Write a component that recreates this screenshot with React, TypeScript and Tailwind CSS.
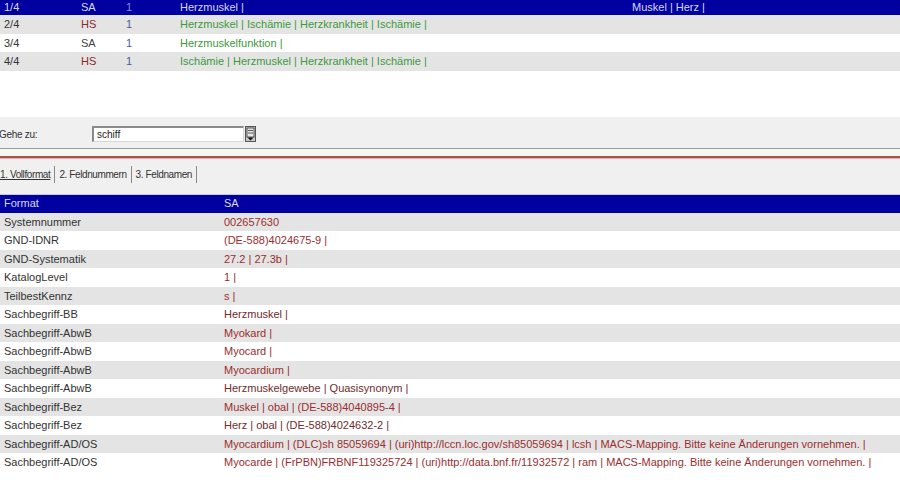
import React from "react";

const top = [
  { a: "1/4", b: "SA", bc: "text-[#d8d8f0]", c: "1", d: "Herzmuskel |", e: "Muskel | Herz |", sel: true },
  { a: "2/4", b: "HS", bc: "text-[#8b2a2a]", c: "1", d: "Herzmuskel | Ischämie | Herzkrankheit | Ischämie |", e: "" },
  { a: "3/4", b: "SA", bc: "text-[#444]", c: "1", d: "Herzmuskelfunktion |", e: "" },
  { a: "4/4", b: "HS", bc: "text-[#8b2a2a]", c: "1", d: "Ischämie | Herzmuskel | Herzkrankheit | Ischämie |", e: "" },
];

const rows: [string, string, boolean][] = [
  ["Systemnummer", "002657630", true],
  ["GND-IDNR", "(DE-588)4024675-9 |", true],
  ["GND-Systematik", "27.2 | 27.3b |", true],
  ["KatalogLevel", "1 |", true],
  ["TeilbestKennz", "s |", true],
  ["Sachbegriff-BB", "Herzmuskel |", false],
  ["Sachbegriff-AbwB", "Myokard |", true],
  ["Sachbegriff-AbwB", "Myocard |", true],
  ["Sachbegriff-AbwB", "Myocardium |", true],
  ["Sachbegriff-AbwB", "Herzmuskelgewebe | Quasisynonym |", false],
  ["Sachbegriff-Bez", "Muskel | obal | (DE-588)4040895-4 |", true],
  ["Sachbegriff-Bez", "Herz | obal | (DE-588)4024632-2 |", false],
  ["Sachbegriff-AD/OS", "Myocardium | (DLC)sh 85059694 | (uri)http://lccn.loc.gov/sh85059694 | lcsh | MACS-Mapping. Bitte keine Änderungen vornehmen. |", true],
  ["Sachbegriff-AD/OS", "Myocarde | (FrPBN)FRBNF119325724 | (uri)http://data.bnf.fr/11932572 | ram | MACS-Mapping. Bitte keine Änderungen vornehmen. |", true],
];

export default function App() {
  return (
    <div className="w-[900px] h-[483px] overflow-hidden bg-white text-[11px] text-[#333]" style={{ fontFamily: '"Liberation Sans", Arial, sans-serif' }}>
      {/* top list */}
      <div className="flex flex-col">
        {top.map((r, i) => (
          <div
            key={i}
            className={
              "flex items-center " +
              (i === 0 ? "h-[15px] bg-[#0000a0] text-[#d8d8f0]" : i % 2 === 1 ? "h-[18.5px] bg-[#e4e4e4]" : "h-[18.5px] bg-white")
            }
          >
            <div className="w-[81px] pl-[4px]">{r.a}</div>
            <div className={"w-[45px] " + (i === 0 ? "" : r.bc)}>{r.b}</div>
            <div className={"w-[54px] " + (i === 0 ? "text-[#8c8ce0]" : "text-[#4a5a9a]")}>{r.c}</div>
            <div className={"w-[452px] " + (i === 0 ? "" : "text-[#3c9a3c]")}>{r.d}</div>
            <div>{r.e}</div>
          </div>
        ))}
      </div>

      <div className="h-[46px]" />

      {/* gray panel */}
      <div className="bg-[#f0f0f0]">
        <div className="h-[31px] flex items-center">
          <div className="w-[93px] text-[10px] tracking-[-0.3px] text-[#333] -ml-[1px] pt-[4px]">Gehe zu:</div>
          <div className="mt-[4px] w-[152px] h-[16px] bg-white border-t-[2px] border-l-[2px] border-t-[#8a8a8a] border-l-[#8a8a8a] border-b border-r border-b-[#d8d8d8] border-r-[#d8d8d8] flex items-center pl-[3px] text-[10px] text-[#222]">
            schiff
          </div>
          <div className="mt-[4px] ml-[1px] w-[11px] h-[16px]">
            <svg width="11" height="16" viewBox="0 0 11 16">
              <rect x="0.5" y="0.5" width="10" height="15" fill="#c8c8c8" stroke="#555" />
              <rect x="2" y="2" width="7" height="9" fill="#e8e8e8" stroke="#333" strokeWidth="0.8" />
              <line x1="3" y1="4.5" x2="8" y2="4.5" stroke="#333" strokeWidth="0.8" />
              <line x1="3" y1="7" x2="8" y2="7" stroke="#333" strokeWidth="0.8" />
              <path d="M2.5 11.5 L8.5 11.5 L5.5 14.5 Z" fill="#111" />
            </svg>
          </div>
        </div>
        <div className="h-[1px] bg-[#9a9aa4]" />
        <div className="h-[7px] bg-[#f6f9f0]" />
        <div className="h-[2px] bg-[#b05050]" />
        <div className="h-[1px] bg-[#e0b0b0]" />
        <div className="h-[32px] flex items-center text-[10px] tracking-[-0.4px] text-[#333]">
          <span className="underline">1. Vollformat</span>
          <span className="mx-[4px] w-[1px] h-[17px] bg-[#888]" />
          <span>2. Feldnummern</span>
          <span className="mx-[4px] w-[1px] h-[17px] bg-[#888]" />
          <span>3. Feldnamen</span>
          <span className="ml-[4px] w-[1px] h-[17px] bg-[#888]" />
        </div>
        <div className="h-[3px]" />
        <div className="h-[1px] bg-[#c8c8e8]" />
      </div>

      {/* detail table */}
      <div className="flex flex-col">
        <div className="h-[18px] bg-[#0000a0] text-[#d8d8f0] flex items-center">
          <div className="w-[224px] pl-[4px]">Format</div>
          <div>SA</div>
        </div>
        {rows.map(([k, v, red], i) => (
          <div key={i} className={"h-[18.5px] flex items-center whitespace-nowrap " + (i % 2 === 0 ? "bg-[#e4e4e4]" : "bg-white")}>
            <div className="w-[224px] pl-[4px] text-[#333]">{k}</div>
            <div className={red ? "text-[#9a2e2e]" : "text-[#6e2c2c]"}>{v}</div>
          </div>
        ))}
      </div>
    </div>
  );
}
